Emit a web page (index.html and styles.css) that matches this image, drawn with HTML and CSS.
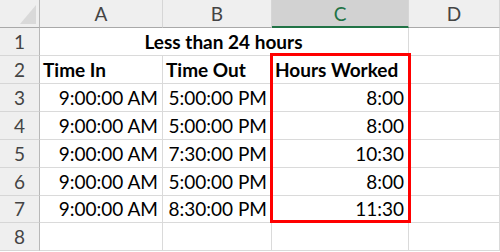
FILE: index.html
```html
<!DOCTYPE html>
<html>
<head>
<meta charset="utf-8">
<link rel="stylesheet" href="styles.css">
</head>
<body>
<div class="sheet">
  <div class="hdr corner"><span class="tri"></span></div>
  <div class="hdr col">A</div>
  <div class="hdr col">B</div>
  <div class="hdr col sel">C</div>
  <div class="hdr col">D</div>

  <div class="rh">1</div>
  <div class="cell merged bold">Less than 24 hours</div>
  <div class="cell"></div>

  <div class="rh">2</div>
  <div class="cell bold">Time In</div>
  <div class="cell bold">Time Out</div>
  <div class="cell bold">Hours Worked</div>
  <div class="cell"></div>

  <div class="rh">3</div>
  <div class="cell num">9:00:00 AM</div>
  <div class="cell num">5:00:00 PM</div>
  <div class="cell num">8:00</div>
  <div class="cell"></div>

  <div class="rh">4</div>
  <div class="cell num">9:00:00 AM</div>
  <div class="cell num">5:00:00 PM</div>
  <div class="cell num">8:00</div>
  <div class="cell"></div>

  <div class="rh">5</div>
  <div class="cell num">9:00:00 AM</div>
  <div class="cell num">7:30:00 PM</div>
  <div class="cell num">10:30</div>
  <div class="cell"></div>

  <div class="rh">6</div>
  <div class="cell num">9:00:00 AM</div>
  <div class="cell num">5:00:00 PM</div>
  <div class="cell num">8:00</div>
  <div class="cell"></div>

  <div class="rh">7</div>
  <div class="cell num">9:00:00 AM</div>
  <div class="cell num">8:30:00 PM</div>
  <div class="cell num">11:30</div>
  <div class="cell"></div>

  <div class="rh">8</div>
  <div class="cell"></div>
  <div class="cell"></div>
  <div class="cell"></div>
  <div class="cell"></div>

  <div class="highlight"></div>
</div>
</body>
</html>
```

FILE: styles.css
```css
html, body {
  margin: 0;
  padding: 0;
  background: #ffffff;
}

.sheet {
  position: relative;
  display: grid;
  grid-template-columns: 40px 123px 109px 137px 91px;
  grid-template-rows: 28px 28px 28px 28px 28px 28px 28px 27px 28px;
  font-family: Lato, "Liberation Sans", sans-serif;
  font-size: 19px;
  color: #000;
}

.hdr {
  background: #efefef;
  border-right: 1px solid #d6d6d6;
  border-bottom: 1px solid #a9a9a9;
  display: flex;
  align-items: center;
  justify-content: center;
  color: #444;
  box-sizing: border-box;
}

.corner {
  border-right: 1px solid #b8b8b8;
  position: relative;
}

.tri {
  position: absolute;
  left: 20px;
  top: 5px;
  width: 0;
  height: 0;
  border-left: 16px solid transparent;
  border-bottom: 19px solid #d9d9d9;
}

.hdr.sel {
  background: #d2d2d2;
  color: #217346;
  border-bottom: 2px solid #217346;
}

.rh {
  background: #efefef;
  border-right: 1px solid #b8b8b8;
  border-bottom: 1px solid #d6d6d6;
  color: #444;
  display: flex;
  align-items: flex-end;
  justify-content: center;
  padding-bottom: 2px;
  box-sizing: border-box;
}

.cell {
  border-right: 1px solid #dadada;
  border-bottom: 1px solid #dadada;
  display: flex;
  align-items: flex-end;
  padding: 0 4px 2px 3px;
  box-sizing: border-box;
  white-space: nowrap;
  overflow: hidden;
}

.bold {
  font-weight: 700;
}

.merged {
  grid-column: span 3;
  justify-content: center;
}

.num {
  justify-content: flex-end;
}

.highlight {
  position: absolute;
  left: 270px;
  top: 53px;
  width: 141px;
  height: 170px;
  border: 3px solid #ff0000;
  box-sizing: border-box;
  pointer-events: none;
}
```
